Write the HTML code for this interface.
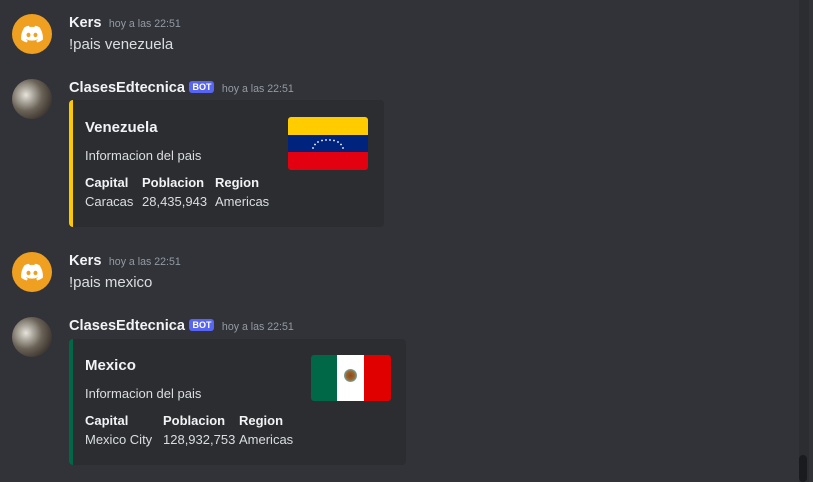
<!DOCTYPE html>
<html><head><meta charset="utf-8"><style>
*{margin:0;padding:0;box-sizing:border-box}
body{width:813px;height:482px;background:#313338;font-family:"Liberation Sans",sans-serif;position:relative;overflow:hidden;color:#dbdee1}
.abs{position:absolute;white-space:nowrap}
.name{font-size:14.6px;font-weight:bold;color:#f2f3f5}
.time{font-size:10.6px;color:#949ba4}
.msg{font-size:15px;color:#dbdee1}
.av{position:absolute;left:12px;width:40px;height:40px;border-radius:50%}
.orange{background:#f0a020}
.photo{background:radial-gradient(circle at 35% 40%,#e8e4dc 0,#a9a49a 22%,#6b6358 45%,#3e3730 75%,#2a2420 100%)}
.bot{font-size:9px;background:#5865f2;color:#fff;padding:1px 3px;border-radius:3px;font-weight:bold;vertical-align:2px}
.embed{position:absolute;left:69px;background:#2b2d31;border-radius:4px}
.t{font-size:15px;font-weight:bold;color:#f2f3f5}
.d{font-size:13px;color:#dbdee1}
.fn{font-size:13px;font-weight:bold;color:#f2f3f5}
.fv{font-size:13px;color:#dbdee1}
</style></head><body>
<div style="position:absolute;left:799px;top:0;width:10px;height:482px;background:#2b2d31"></div>
<div style="position:absolute;left:799px;top:455px;width:8px;height:27px;background:#1a1b1e;border-radius:4px"></div>

<div class="av orange" style="top:14px"><svg width="40" height="40" viewBox="0 0 40 40"><path fill="#fff" d="M27.5 13.2a18 18 0 0 0-4.5-1.4l-.6 1.2a16.6 16.6 0 0 0-4.8 0l-.6-1.2a18 18 0 0 0-4.5 1.4C9.6 17.5 8.8 21.6 9.2 25.7a18 18 0 0 0 5.5 2.8l1.2-1.9a11.5 11.5 0 0 1-1.8-.9l.4-.3a13 13 0 0 0 11 0l.4.3c-.6.4-1.2.7-1.8.9l1.2 1.9a18 18 0 0 0 5.5-2.8c.5-4.7-.8-8.8-3.3-12.5zM16.5 23.2c-1.1 0-2-1-2-2.2s.9-2.2 2-2.2 2 1 2 2.2-.9 2.2-2 2.2zm7 0c-1.1 0-2-1-2-2.2s.9-2.2 2-2.2 2 1 2 2.2-.9 2.2-2 2.2z"/></svg></div>
<div class="abs" style="left:69px;top:14px"><span class="name">Kers</span> <span class="time" style="margin-left:3px">hoy a las 22:51</span></div>
<div class="abs msg" style="left:69px;top:36px">!pais venezuela</div>

<div class="av photo" style="top:79px"></div>
<div class="abs" style="left:69px;top:79px"><span class="name">ClasesEdtecnica</span> <span class="bot">BOT</span> <span class="time" style="margin-left:3px">hoy a las 22:51</span></div>
<div class="embed" style="top:100px;width:315px;height:127px;border-left:4px solid #fcc900">
 <div class="abs t" style="left:12px;top:19px">Venezuela</div>
 <div class="abs d" style="left:12px;top:48px">Informacion del pais</div>
 <div class="abs fn" style="left:12px;top:75px">Capital</div>
 <div class="abs fn" style="left:69px;top:75px">Poblacion</div>
 <div class="abs fn" style="left:142px;top:75px">Region</div>
 <div class="abs fv" style="left:12px;top:94px">Caracas</div>
 <div class="abs fv" style="left:69px;top:94px">28,435,943</div>
 <div class="abs fv" style="left:142px;top:94px">Americas</div>
 <svg style="position:absolute;left:215px;top:17px;border-radius:3px" width="80" height="53" viewBox="0 0 80 53">
  <rect width="80" height="18" fill="#ffcc00"/><rect y="18" width="80" height="17" fill="#00247d"/><rect y="35" width="80" height="18" fill="#e30011"/>
  <g fill="#fff"><circle cx="25" cy="31" r=".9"/><circle cx="27" cy="27.5" r=".9"/><circle cx="30" cy="25" r=".9"/><circle cx="34" cy="23.5" r=".9"/><circle cx="38" cy="23" r=".9"/><circle cx="42" cy="23" r=".9"/><circle cx="46" cy="23.5" r=".9"/><circle cx="50" cy="25" r=".9"/><circle cx="53" cy="27.5" r=".9"/><circle cx="55" cy="31" r=".9"/></g>
 </svg>
</div>

<div class="av orange" style="top:252px"><svg width="40" height="40" viewBox="0 0 40 40"><path fill="#fff" d="M27.5 13.2a18 18 0 0 0-4.5-1.4l-.6 1.2a16.6 16.6 0 0 0-4.8 0l-.6-1.2a18 18 0 0 0-4.5 1.4C9.6 17.5 8.8 21.6 9.2 25.7a18 18 0 0 0 5.5 2.8l1.2-1.9a11.5 11.5 0 0 1-1.8-.9l.4-.3a13 13 0 0 0 11 0l.4.3c-.6.4-1.2.7-1.8.9l1.2 1.9a18 18 0 0 0 5.5-2.8c.5-4.700-.8-8.8-3.3-12.5zM16.5 23.2c-1.1 0-2-1-2-2.2s.9-2.2 2-2.2 2 1 2 2.2-.9 2.2-2 2.2zm7 0c-1.1 0-2-1-2-2.2s.9-2.2 2-2.2 2 1 2 2.2-.9 2.2-2 2.2z"/></svg></div>
<div class="abs" style="left:69px;top:252px"><span class="name">Kers</span> <span class="time" style="margin-left:3px">hoy a las 22:51</span></div>
<div class="abs msg" style="left:69px;top:274px">!pais mexico</div>

<div class="av photo" style="top:317px"></div>
<div class="abs" style="left:69px;top:317px"><span class="name">ClasesEdtecnica</span> <span class="bot">BOT</span> <span class="time" style="margin-left:3px">hoy a las 22:51</span></div>
<div class="embed" style="top:339px;width:337px;height:126px;border-left:4px solid #006847">
 <div class="abs t" style="left:12px;top:18px">Mexico</div>
 <div class="abs d" style="left:12px;top:47px">Informacion del pais</div>
 <div class="abs fn" style="left:12px;top:74px">Capital</div>
 <div class="abs fn" style="left:90px;top:74px">Poblacion</div>
 <div class="abs fn" style="left:166px;top:74px">Region</div>
 <div class="abs fv" style="left:12px;top:93px">Mexico City</div>
 <div class="abs fv" style="left:90px;top:93px">128,932,753</div>
 <div class="abs fv" style="left:166px;top:93px">Americas</div>
 <div style="position:absolute;left:238px;top:16px;width:80px;height:46px;border-radius:3px;overflow:hidden;display:flex">
  <div style="width:26px;background:#006847"></div><div style="width:27px;background:#fff;position:relative"><div style="position:absolute;left:7px;top:14px;width:13px;height:13px;border-radius:50%;background:radial-gradient(circle,#8b4a1c 0,#a0642c 45%,#6fa8a0 70%,#fff 100%)"></div></div><div style="width:27px;background:#e10000"></div>
 </div>
</div>
</body></html>
